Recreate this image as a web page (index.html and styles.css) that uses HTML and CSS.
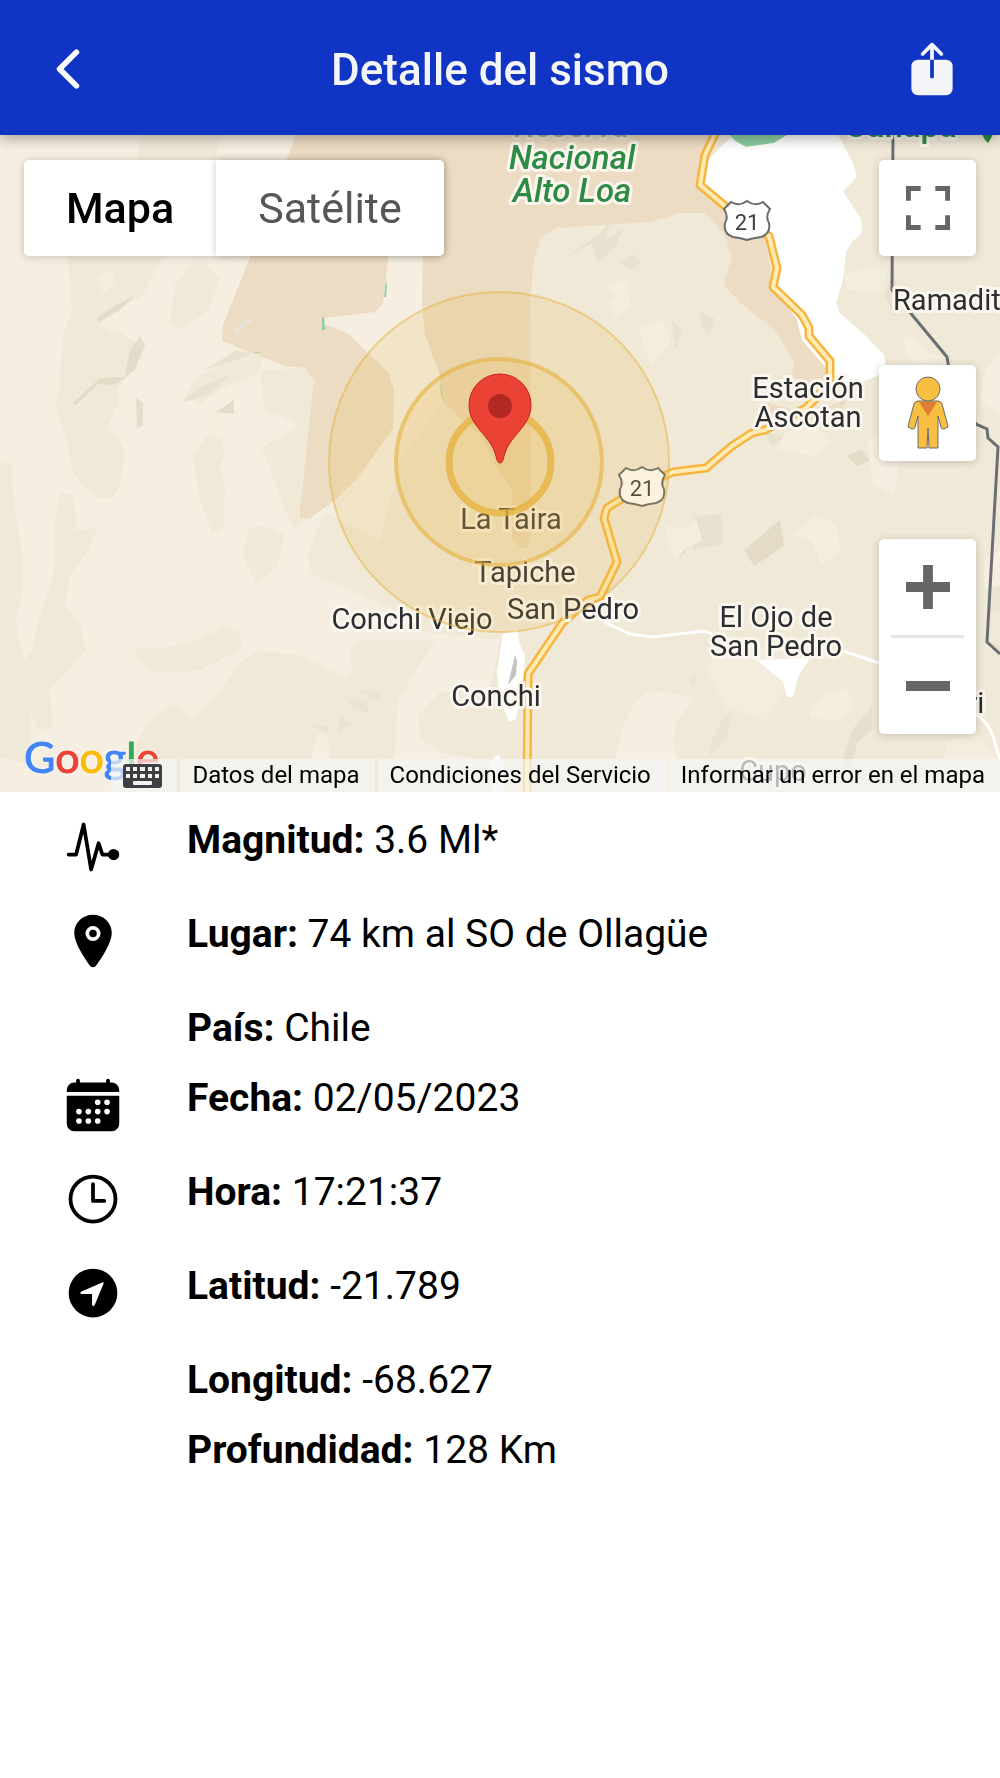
FILE: index.html
```html
<!DOCTYPE html>
<html lang="es">
<head>
<meta charset="utf-8">
<meta name="viewport" content="width=device-width, initial-scale=1">
<title>Detalle del sismo</title>
<link rel="stylesheet" href="styles.css">
</head>
<body>
<header class="toolbar">
  <button class="toolbar-button" type="button" aria-label="Volver">
    <svg class="icon" viewBox="0 0 512 512"><path d="M328 112L184 256l144 144" fill="none" stroke="#fff" stroke-width="48" stroke-linecap="round" stroke-linejoin="round"/></svg>
  </button>
  <h1 class="toolbar-title">Detalle del sismo</h1>
  <button class="toolbar-button" type="button" aria-label="Compartir">
    <svg class="icon" viewBox="0 0 512 512">
      <path d="M136 176h240a56 56 0 0156 56v192a56 56 0 01-56 56H136a56 56 0 01-56-56V232a56 56 0 0156-56z" fill="#f4f5f8"/>
      <path d="M256 176V52M176 128l80-80 80 80" fill="none" stroke="#f4f5f8" stroke-width="32" stroke-linecap="round" stroke-linejoin="round"/>
      <path d="M240 176h32v145a16 16 0 01-32 0z" fill="#1034c4"/>
    </svg>
  </button>
</header>

<main>
  <section class="map" aria-label="Mapa del sismo">
    <svg class="map-canvas" viewBox="0 135 1000 657" preserveAspectRatio="xMidYMid slice">
      <rect y="135" width="1000" height="657" fill="#f0e9d8"/>

      <!-- lowlands -->
      <g fill="#f5eee1">
        <path d="M0 135H424L422 300 425 335 440 375 443 402 400 460 380 540 325 513 307 555 312 575 350 590 390 608 420 632 500 640 490 690 440 692 418 715 420 738 440 752 480 760 478 792H0z"/>
        <path d="M613 775c6-50 22-86 42-84l40 6-18 25-4 20 14 50H610z"/>
        <path d="M868 440l22-10 10 30-6 34-22-10z"/>
        <path d="M985 370l15-18v62l-20-14zM984 560l16-10v65l-14-5z"/>
        <path d="M722 640l50 10 14 40-20 30-40-12-20-38z" opacity=".7"/>
        <path d="M930 792l18-50 28-10 24 30v30z" opacity=".7"/>
      </g>
      <g fill="#f0e9d8">
        <path d="M142 135H222L214 165 190 200 163 257 152 277 143 295 130 303 98 320 110 326 135 343 142 350 130 372 117 390 119 402 107 428 118 437 125 452 120 485 112 498H100L85 488 73 472 67 440 55 405 60 388 62 340 72 309 68 256 90 200 135 165z"/>
        <path d="M175 284L192 264 205 262 220 280 207 312 180 330 170 322z"/>
        <path d="M260 370L305 368 314 380 300 515 312 518 295 528 285 510 262 448 300 425 265 410z"/>
        <path d="M208 434L193 458 200 500 212 533 223 528 225 490 220 465 225 455 222 440z"/>
        <path d="M250 528L265 526 284 535 278 565 256 585 242 552z"/>
        <path d="M138 648L165 648 190 643 225 627 238 632 243 644 235 652 200 670 180 673 155 672 135 657z"/>
        <path d="M0 460L12 464 13 495 23 560V590L15 620 24 661 32 650 40 615 53 580 55 520 60 492 72 495 77 520 75 530 98 528 88 550 70 575 65 605 80 625 86 650 50 690 52 725 45 732 38 728 30 712V765L0 757z"/>
        <path d="M130 760Q145 715 175 704L193 720 220 692Q240 655 262 651L300 655 325 668 345 677 352 672 350 650 360 640H435L410 680 398 700 392 792H120z"/>
        <path d="M195 378l20-10 20-18 30 4-8 20-34 14-24 16-14-8z"/>
      </g>
      <path d="M310 770q4-45 16-36 8 20 6 58h-20z" fill="#f5eee1"/>

      <!-- nature reserves -->
      <g fill="#ecdcc3">
        <path d="M296 135H716L701 185 725 210 765 235 773 287 800 320 808 340 826 368 832 384 820 396 792 376 794 362 775 330 740 303 724 285 725 278 732 258 725 235 705 213H680L650 222 556 228 540 238 534 260 530 300 531 530 528 548H520L512 537V490L500 473 480 435 457 415 443 402 440 375 425 335 422 300 424 190H389L388 260 383 303 375 312 325 318 323 324 335 328 350 335 365 350 388 372 394 390 393 428 358 478 333 502 310 518H300V510L314 380 305 368 285 366 252 353 222 341 223 325 249 260z"/>
        <path d="M766 402l40 12 30-10 10-6-4 16-30 6-50-6z"/>
      </g>

      <!-- relief -->
      <g fill="#ded5c2" opacity=".7">
        <path d="M72 404L100 378 125 377 130 350 140 336 145 345 135 370 115 385 98 384 76 405z"/>
        <path d="M97 318L118 304 134 296 120 310 100 322zM136 398l7 5v22l-6 4zM216 412l18-12v14z"/>
        <path d="M205 370l30-20 15 4-20 8zM182 400l20-14 30-12-20 18-26 10z" opacity=".6"/>
        <path d="M565 258l35-25 10-12-4 18 18-10-10 20-16 14-6-20z" opacity=".6"/>
        <path d="M620 262l14-8 8 8-10 8zM648 332l20 4-8 18-14-8zM672 320l10 10-6 20zM700 312l14 6-4 18-8-8z" opacity=".6"/>
        <path d="M694 516l28-2v30l-30 6 6-16-20 28z" opacity=".6"/>
        <path d="M744 570l36-30 4 26-30 20z" transform="translate(0 -20)"/>
        <path d="M846 456l16-6 8 10-12 6z"/>
        <path d="M840 770l12-40 20-24v24l-14 12-8 26z" opacity=".7"/>
        <path d="M345 696l22 8 4 10-20-8zM340 714l12 10-14 8zM314 726h14v8zM354 690l26 2-2 8z" opacity=".4"/>
        <path d="M710 745l14-28 8-4-6 26-18 20zM688 680l10-6-4 12z" opacity=".4"/>
        <path d="M884 295l10-24 8 36-8 10zM765 430l20 8-14 8zM985 590l15-5v28h-12zM980 640l20 4v10z" opacity=".5"/>
      </g>
      <g fill="#f6efe0" opacity=".8">
        <path d="M98 276l14-6 4 10-14 16zM100 324l20-10 6 8-14 12zM130 374l16-14 3 6-16 12zM205 418l26-4-16 22zM218 400l12-14 12 2-22 20z"/>
        <path d="M608 300l18-10 6 14-16 14zM640 328l22-8 10 20-20 24-8-14zM606 285l24-6-6 24z"/>
        <path d="M664 524l20 6 12-12 6 22-18 10-10 8zM798 530l18-14 20 8 4 26-18 14-12-24-16-4z"/>
        <path d="M810 708l14-14 22-6 10 20-20 12-26-2z"/>
        <path d="M844 275l26-8 18 4-10 24-30-6zM902 336l10 2 20 16 14 4-20 10-16-6z"/>
        <path d="M776 450l10-18 30-6 14 16-16 14z"/>
      </g>
      <path d="M234 330l16-13 2 4-16 13z" fill="#e8e3d8"/>

      <!-- vegetation -->
      <g fill="#8fcfa3">
        <path d="M730 135L738 144 746 147 774 143 787 135z"/>
        <path d="M384 297l2-16 1 4-1 12zM322 318l2-1 1 13h-3zM255 352l7 1-7 0zM440 378l3 22-2-6z"/>
      </g>

      <!-- salt flats -->
      <g fill="#fff">
        <path d="M730 138L708 160 698 180 700 188 770 235 773 285 797 320 802 340 828 370 833 382H862L877 376 886 365 884 355 865 335 840 313 836 303 843 280 846 252 852 242 862 233 861 219 843 191 857 177 853 163 838 135H787L774 143 746 147z"/>
        <path d="M757 660L783 682 787 697H793L799 675 810 658z"/>
        <path d="M503 634l14-5 3 16 5 10-1 18-8 46-7 3-8-20-4-30z"/>
        <path d="M490 762l8-8 6 10v28h-12z"/>
      </g>
      <path d="M515 655l2 6-1 14-8 10z" fill="#c4c4c4"/>

      <!-- secondary roads -->
      <path d="M604 622L630 634 653 637 704 631 730 640M840 650L885 665M976 714Q988 722 993 736L1000 760" fill="none" stroke="#fff" stroke-width="3"/>

      <!-- country border -->
      <path d="M893 135L892 290 913 316 947 357 951 380 976 424 987 429 988 438 998 447 987 642 1000 654" fill="none" stroke="#6b6f74" stroke-width="3"/>

      <!-- route 21 -->
      <defs>
        <path id="route" d="M717 130L705 155 700 185 725 206 747 222 769 236 777 268 773 287 802 315 809 328V336L830 361V378L826 388 806 408 765 430 752 433 732 446 706 468 673 472 642 486 607 508 604 518 617 562 600 597 588 600 563 622 528 674 527 794"/>
        <path id="shield" d="M-16-19Q-8-14 0-20 8-14 16-19L23-12Q18-4 22 2 24 13 14 16 6 17 0 19-6 17-14 16-24 13-22 2-18-4-23-12z"/>
      </defs>
      <use class="route route-edge" href="#route"/>
      <use class="route route-core" href="#route"/>
      <g class="shield">
        <use href="#shield" x="747" y="221"/>
        <text x="747" y="230">21</text>
        <use href="#shield" x="642" y="487"/>
        <text x="642" y="496">21</text>
      </g>

      <!-- place names -->
      <g class="park">
        <text x="572" y="137" opacity=".4">Reserva</text>
        <text x="572" y="169">Nacional</text>
        <text x="572" y="202">Alto Loa</text>
      </g>
      <text class="peak" x="901" y="137">Cañapa</text>
      <path d="M980 130h15l-5 10-2 3-3-3z" fill="#2e8b45"/>
      <g class="place">
        <text x="808" y="398">Estación</text>
        <text x="808" y="427">Ascotan</text>
        <text class="place-start" x="893" y="310">Ramadit</text>
        <text x="776" y="627">El Ojo de</text>
        <text x="776" y="656">San Pedro</text>
        <text x="511" y="529">La Taira</text>
        <text x="525" y="582">Tapiche</text>
        <text x="573" y="619">San Pedro</text>
        <text x="412" y="629">Conchi Viejo</text>
        <text x="496" y="706">Conchi</text>
        <text x="960" y="713">Turi</text>
        <text x="773" y="781">Cupo</text>
      </g>

      <!-- epicentre -->
      <g fill="#e8b440" stroke="#e5b13c">
        <circle cx="499" cy="462" r="170" fill-opacity=".16" stroke-opacity=".5" stroke-width="2"/>
        <circle cx="499" cy="462" r="103" fill-opacity=".18" stroke-opacity=".6" stroke-width="4"/>
        <circle cx="500" cy="462" r="51" fill-opacity=".12" stroke-opacity=".75" stroke-width="7"/>
      </g>
      <path d="M500 463C498 463 497 461 496 456 490 434 469 427 469 405A31 31 0 01531 405C531 427 510 434 504 456 503 461 502 463 500 463z" fill="#ea4335" stroke="#c5221f" stroke-width="1"/>
      <circle cx="500" cy="406" r="12" fill="#b22822"/>
    </svg>

    <div class="map-types">
      <button class="map-type map-type-active" type="button" aria-pressed="true">Mapa</button>
      <button class="map-type" type="button" aria-pressed="false">Satélite</button>
    </div>

    <div class="map-tools">
      <button class="tool" type="button" aria-label="Pantalla completa">
        <svg class="tool-icon" viewBox="0 0 18 18" fill="#666"><path d="M0 0v6h2V2h4V0zM18 0h-6v2h4v4h2zM16 16h-4v2h6v-6h-2zM2 12H0v6h6v-2H2z"/></svg>
      </button>
      <button class="tool tool-pegman" type="button" aria-label="Street View">
        <svg class="pegman" viewBox="0 0 42 74" stroke="#6b6b6b" stroke-width="1">
          <path d="M11 25h20q3 0 4 3l6 22q0 2-2 2l-3 1q-2 0-2-2l-3-11v32H22L21 52 20 72H11V40L8 51q0 2-2 2l-3-1q-2 0-2-2L7 28q1-3 4-3z" fill="#f8bf43"/>
          <path d="M12 26h18l-9 14z" fill="#de7d33" stroke="none"/>
          <circle cx="21" cy="13" r="12" fill="#f8bf43"/>
        </svg>
      </button>
      <div class="zoom">
        <button class="tool-plain" type="button" aria-label="Acercar">
          <svg class="tool-icon" viewBox="0 0 18 18" fill="#666"><path d="M18 7h-7V0H7v7H0v4h7v7h4v-7h7z"/></svg>
        </button>
        <div class="zoom-divider"></div>
        <button class="tool-plain" type="button" aria-label="Alejar">
          <svg class="tool-icon" viewBox="0 0 18 18" fill="#666"><path d="M0 7h18v4H0z"/></svg>
        </button>
      </div>
    </div>

    <a class="brand" href="#" aria-label="Google"><span class="blue">G</span><span class="red">o</span><span class="yellow">o</span><span class="blue">g</span><span class="green">l</span><span class="red">e</span></a>

    <div class="legal">
      <button class="legal-item" type="button" aria-label="Combinaciones de teclas">
        <svg class="keyboard" viewBox="0 0 39 24">
          <rect width="39" height="24" rx="3" fill="#3c4043"/>
          <path d="M3 3h4v4H3zM10 3h4v4h-4zM17 3h5v4h-5zM25 3h4v4h-4zM32 3h4v4h-4zM3 10h4v4H3zM10 10h4v4h-4zM17 10h5v4h-5zM25 10h4v4h-4zM32 10h4v4h-4z" fill="#f3f1ee"/>
          <rect x="10" y="17" width="19" height="4" rx="1" fill="#f3f1ee"/>
        </svg>
      </button>
      <button class="legal-item" type="button">Datos del mapa</button>
      <a class="legal-item" href="#">Condiciones del Servicio</a>
      <a class="legal-item" href="#">Informar un error en el mapa</a>
    </div>
  </section>

  <ul class="details">
    <li class="detail">
      <svg class="icon" viewBox="0 0 512 512"><path d="M48 320h64l64-256 64 384 64-224 32 96h64" fill="none" stroke="#000" stroke-width="32" stroke-linecap="round" stroke-linejoin="round"/><circle cx="432" cy="320" r="48"/></svg>
      <p class="value"><strong>Magnitud:</strong> 3.6 Ml*</p>
    </li>
    <li class="detail">
      <svg class="icon" viewBox="0 0 512 512"><circle cx="256" cy="192" r="32"/><path d="M256 32c-88.220 0-160 68.650-160 153 0 40.170 18.310 93.590 54.420 158.780 29 52.340 62.550 99.670 80 123.220a31.750 31.750 0 0051.220 0c17.420-23.550 51-70.880 80-123.220C397.690 278.610 416 225.190 416 185c0-84.350-71.780-153-160-153zm0 224a64 64 0 1164-64 64.070 64.070 0 01-64 64z"/></svg>
      <p class="value"><strong>Lugar:</strong> 74 km al SO de Ollagüe</p>
    </li>
    <li class="detail">
      <p class="value"><strong>País:</strong> Chile</p>
    </li>
    <li class="detail">
      <svg class="icon" viewBox="0 0 512 512">
        <path d="M480 128a64 64 0 00-64-64h-16V48a16 16 0 00-32 0v16H144V48a16 16 0 00-32 0v16H96a64 64 0 00-64 64v12a4 4 0 004 4h440a4 4 0 004-4zM32 416a64 64 0 0064 64h320a64 64 0 0064-64V179a3 3 0 00-3-3H35a3 3 0 00-3 3z"/>
        <g fill="#fff"><circle cx="296" cy="232" r="24"/><circle cx="376" cy="232" r="24"/><circle cx="136" cy="312" r="24"/><circle cx="216" cy="312" r="24"/><circle cx="296" cy="312" r="24"/><circle cx="376" cy="312" r="24"/><circle cx="136" cy="392" r="24"/><circle cx="216" cy="392" r="24"/><circle cx="296" cy="392" r="24"/></g>
      </svg>
      <p class="value"><strong>Fecha:</strong> 02/05/2023</p>
    </li>
    <li class="detail">
      <svg class="icon" viewBox="0 0 512 512" fill="none" stroke="#000" stroke-width="32" stroke-linecap="round" stroke-linejoin="round"><circle cx="256" cy="256" r="192"/><path d="M256 128v144h96"/></svg>
      <p class="value"><strong>Hora:</strong> 17:21:37</p>
    </li>
    <li class="detail">
      <svg class="icon" viewBox="0 0 512 512"><circle cx="256" cy="256" r="208"/><path d="M342 170L266 354Q257 370 254 354V266Q254 258 246 258H160Q146 256 160 248z" fill="#fff" stroke="#fff" stroke-width="12" stroke-linejoin="round"/></svg>
      <p class="value"><strong>Latitud:</strong> -21.789</p>
    </li>
    <li class="detail">
      <p class="value"><strong>Longitud:</strong> -68.627</p>
    </li>
    <li class="detail">
      <p class="value"><strong>Profundidad:</strong> 128 Km</p>
    </li>
  </ul>
</main>
</body>
</html>
```
FILE: styles.css
```css
* {
  box-sizing: border-box;
}

body {
  margin: 0;
  background: #fff;
  color: #000;
  font-family: Roboto, "Noto Sans", sans-serif;
}

button {
  margin: 0;
  padding: 0;
  border: 0;
  background: none;
  color: inherit;
  font: inherit;
  cursor: pointer;
}

.icon {
  display: block;
  width: 60px;
  height: 60px;
}

.toolbar {
  position: relative;
  z-index: 2;
  display: flex;
  align-items: center;
  justify-content: space-between;
  padding: 39px 38px 36px;
  background: #1034c4;
  box-shadow: 0 4px 12px rgba(0, 0, 0, 0.3);
}

.toolbar-title {
  margin: 0;
  padding-top: 2px;
  color: #f4f5f8;
  font-size: 44px;
  font-weight: 500;
  line-height: 52px;
}

.map {
  position: relative;
  overflow: hidden;
}

.map-canvas {
  display: block;
  width: 100%;
  aspect-ratio: 1000 / 657;
}

.route {
  fill: none;
  stroke-linejoin: round;
}

.route-edge {
  stroke: #f7b540;
  stroke-width: 9px;
}

.route-core {
  stroke: #ffebb4;
  stroke-width: 4px;
}

.park,
.peak,
.place {
  text-anchor: middle;
  paint-order: stroke;
  stroke: #fbf7ef;
  stroke-width: 6px;
  stroke-linejoin: round;
}

.place {
  font-size: 29px;
  fill: #2b2d31;
}

.place-start {
  text-anchor: start;
}

.park {
  font-size: 33px;
  font-style: italic;
  font-weight: 500;
  fill: #2e8b45;
}

.peak {
  font-size: 33px;
  font-weight: 500;
  fill: #2e8b45;
}

.shield use {
  fill: #fff;
  stroke: #6b6b6b;
  stroke-width: 2px;
}

.shield text {
  text-anchor: middle;
  font-size: 22px;
  fill: #3c3c3c;
}

.map-types {
  position: absolute;
  top: 25px;
  left: 24px;
  display: flex;
  border-radius: 5px;
  box-shadow: 0 1px 8px rgba(0, 0, 0, 0.2);
}

.map-type {
  padding: 0 42px;
  border-radius: 0 5px 5px 0;
  background: #fff;
  color: #565656;
  font-size: 43px;
  line-height: 96px;
  box-shadow: 0 0 8px rgba(0, 0, 0, 0.2);
}

.map-type-active {
  border-radius: 5px 0 0 5px;
  color: #000;
  font-weight: 500;
  box-shadow: none;
}

.map-tools {
  position: absolute;
  top: 25px;
  right: 24px;
  display: flex;
  flex-direction: column;
  width: 97px;
}

.tool,
.zoom {
  border-radius: 5px;
  background: #fff;
  box-shadow: 0 1px 8px rgba(0, 0, 0, 0.2);
}

.tool,
.tool-plain {
  display: flex;
  align-items: center;
  justify-content: center;
  width: 97px;
  height: 96px;
}

.tool-icon {
  width: 44px;
  height: 44px;
}

.tool-pegman {
  margin: 109px 0 78px;
}

.pegman {
  width: 42px;
  height: 74px;
}

.zoom-divider {
  height: 3px;
  margin: 0 12px;
  background: #e6e6e6;
}

.brand {
  position: absolute;
  bottom: 9px;
  left: 24px;
  font-family: Lato, sans-serif;
  font-size: 43px;
  line-height: 52px;
  text-decoration: none;
  text-shadow: 0 0 3px #fff, 0 0 3px #fff;
  -webkit-text-stroke: 1px currentColor;
}

.blue {
  color: #4285f4;
}

.red {
  color: #ea4335;
}

.yellow {
  color: #fbbc04;
}

.green {
  color: #34a853;
}

.legal {
  position: absolute;
  right: 0;
  bottom: 0;
  display: flex;
  gap: 3px;
}

.legal-item {
  display: flex;
  align-items: center;
  height: 33px;
  padding: 0 15px 0 12px;
  background: rgba(245, 245, 245, 0.7);
  color: #000;
  font-size: 24px;
  line-height: 33px;
  text-decoration: none;
}

.keyboard {
  width: 39px;
  height: 24px;
}

.details {
  margin: 0;
  padding: 25px 24px 48px 63px;
  list-style: none;
}

.detail {
  display: grid;
  grid-template-columns: 60px 1fr;
  column-gap: 64px;
  align-items: start;
  margin-bottom: 24px;
}

.detail:has(.icon) {
  margin-bottom: 34px;
}

.value {
  grid-column: 2;
  margin: 0;
  font-size: 39px;
  line-height: 46px;
}
```
